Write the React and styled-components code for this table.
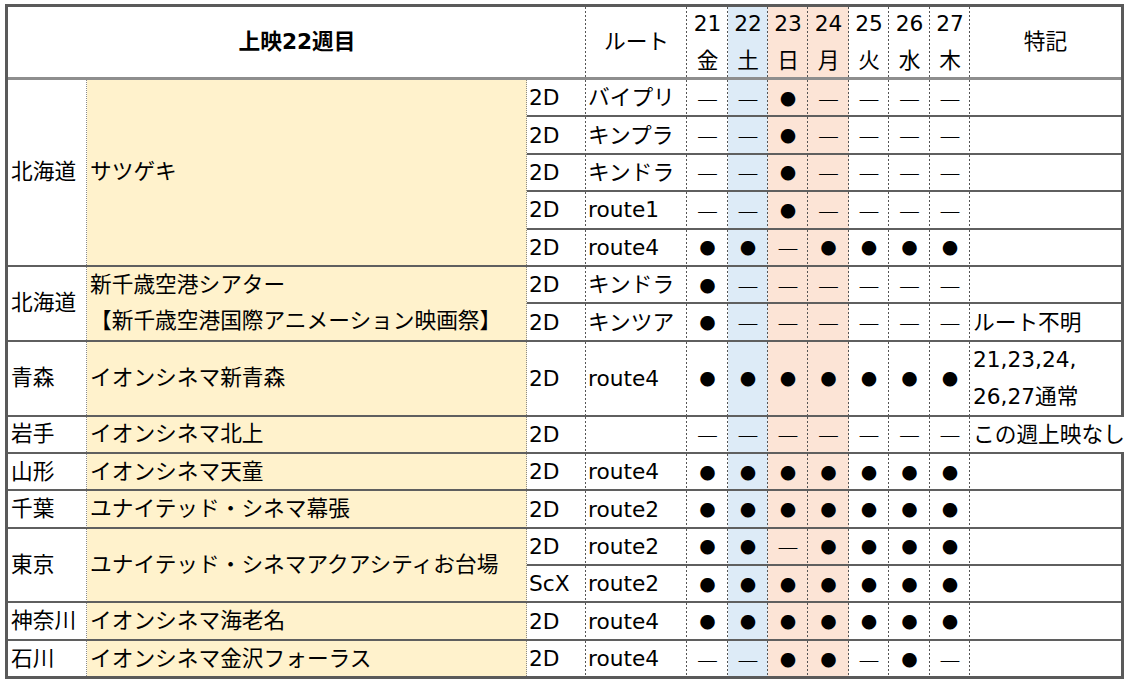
import styled, { createGlobalStyle } from 'styled-components'

const GlobalStyle = createGlobalStyle`
  html, body {
    margin: 0;
    padding: 0;
    background: #ffffff;
  }
  body {
    font-family: "DejaVu Sans", "Noto Sans CJK JP", sans-serif;
    color: #000;
  }
`

const ROW_H = 37.4
const COLS = '59px 101px 41px 40px 40px 41px 40px 41px 40px 151px'
const HEAD_COLS = '578px 101px 41px 40px 40px 41px 40px 41px 40px 151px'
const SHADES = { blue: '#ddebf7', pink: '#fce4d6' }

// vertical separators, drawn as a 1px strip on the right edge of a cell
const LINES = {
  fine: 'repeating-linear-gradient(to bottom, #8a8a8a 0 1px, transparent 1px 2px) right top / 1px 100% no-repeat',
  dot: 'repeating-linear-gradient(to bottom, #555 0 2px, transparent 2px 4px) right top / 1px 100% no-repeat',
}

const bg = p => (p.$line ? LINES[p.$line] + ', ' : '') + (p.$bg || '#ffffff')

const DAYS = [
  { d: 21, w: '金' },
  { d: 22, w: '土', shade: 'blue' },
  { d: 23, w: '日', shade: 'pink' },
  { d: 24, w: '月', shade: 'pink' },
  { d: 25, w: '火' },
  { d: 26, w: '水' },
  { d: 27, w: '木' },
]

const ALL = '●●●●●●●'

const GROUPS = [
  {
    pref: '北海道',
    name: ['サツゲキ'],
    rows: [
      { fmt: '2D', route: 'バイプリ', marks: '――●――――' },
      { fmt: '2D', route: 'キンプラ', marks: '――●――――' },
      { fmt: '2D', route: 'キンドラ', marks: '――●――――' },
      { fmt: '2D', route: 'route1', marks: '――●――――' },
      { fmt: '2D', route: 'route4', marks: '●●―●●●●' },
    ],
  },
  {
    pref: '北海道',
    name: ['新千歳空港シアター', '【新千歳空港国際アニメーション映画祭】'],
    rows: [
      { fmt: '2D', route: 'キンドラ', marks: '●――――――' },
      { fmt: '2D', route: 'キンツア', marks: '●――――――', note: ['ルート不明'] },
    ],
  },
  {
    pref: '青森',
    name: ['イオンシネマ新青森'],
    rows: [{ fmt: '2D', route: 'route4', marks: ALL, note: ['21,23,24,', '26,27通常'], tall: true }],
  },
  {
    pref: '岩手',
    name: ['イオンシネマ北上'],
    rows: [{ fmt: '2D', route: '', marks: '―――――――', note: ['この週上映なし'], spill: true }],
  },
  {
    pref: '山形',
    name: ['イオンシネマ天童'],
    rows: [{ fmt: '2D', route: 'route4', marks: ALL }],
  },
  {
    pref: '千葉',
    name: ['ユナイテッド・シネマ幕張'],
    rows: [{ fmt: '2D', route: 'route2', marks: ALL }],
  },
  {
    pref: '東京',
    name: ['ユナイテッド・シネマアクアシティお台場'],
    rows: [
      { fmt: '2D', route: 'route2', marks: '●●―●●●●' },
      { fmt: 'ScX', route: 'route2', marks: ALL },
    ],
  },
  {
    pref: '神奈川',
    name: ['イオンシネマ海老名'],
    rows: [{ fmt: '2D', route: 'route4', marks: ALL }],
  },
  {
    pref: '石川',
    name: ['イオンシネマ金沢フォーラス'],
    rows: [{ fmt: '2D', route: 'route4', marks: '――●●―●―' }],
  },
]

const Page = styled.div`
  padding: 4px 0 0 5px;
`

const Sheet = styled.div`
  width: 1113px;
  border: 3px solid #5a5a5a;
  font-size: 21.7px;
  line-height: 1.2;
`

const HeaderRow = styled.div`
  display: grid;
  grid-template-columns: ${HEAD_COLS};
  grid-template-rows: minmax(0, 1fr);
  height: 73px;
  box-sizing: border-box;
  border-bottom: 3px solid #8e8e8e;
`

const HeadCell = styled.div`
  display: flex;
  align-items: center;
  justify-content: center;
  font-weight: ${p => (p.$bold ? 700 : 400)};
  background: ${bg};
`

const DayHead = styled.div`
  display: flex;
  flex-direction: column;
  align-items: center;
  justify-content: center;
  line-height: 37px;
  min-height: 0;
  background: ${bg};
`

const Group = styled.div`
  display: flex;
  border-bottom: ${p => (p.$last ? 'none' : '2px solid #5f5f5f')};
`

const Pref = styled.div`
  width: 79px;
  flex: none;
  display: flex;
  align-items: center;
  padding-left: 3px;
  box-sizing: border-box;
  background: ${bg};
`

const Name = styled.div`
  width: 440px;
  flex: none;
  display: flex;
  flex-direction: column;
  justify-content: center;
  padding-left: 3px;
  box-sizing: border-box;
  line-height: ${p => (p.$multi ? '36px' : 1.2)};
  white-space: nowrap;
  background: ${bg};
`

const Rows = styled.div`
  flex: 1;
  display: flex;
  flex-direction: column;
`

const SubRow = styled.div`
  display: grid;
  grid-template-columns: ${COLS};
  grid-template-rows: minmax(0, 1fr);
  box-sizing: border-box;
  flex: none;
  height: ${p => p.$units * ROW_H - (p.$last ? 2 : 0)}px;
  border-bottom: ${p => (p.$last ? 'none' : '2px solid #5f5f5f')};
`

const TextCell = styled.div`
  display: flex;
  flex-direction: column;
  justify-content: center;
  min-height: 0;
  padding-left: ${p => p.$pad || 2}px;
  line-height: 37px;
  white-space: nowrap;
  background: ${bg};
  margin-right: ${p => (p.$spill ? '-3px' : 0)};
`

const Mark = styled.div`
  display: flex;
  align-items: center;
  justify-content: center;
  min-height: 0;
  font-family: "Noto Sans CJK JP", sans-serif;
  font-size: ${p => (p.$dot ? 16 : 22)}px;
  line-height: 1;
  background: ${bg};
`

const Line = styled.span`
  display: block;
`

const App = () => (
  <>
    <GlobalStyle />
    <Page>
      <Sheet>
        <HeaderRow>
          <HeadCell $bold $line="dot">上映22週目</HeadCell>
          <HeadCell $line="dot">ルート</HeadCell>
          {DAYS.map(day => (
            <DayHead key={day.d} $line="dot" $bg={SHADES[day.shade]}>
              <span>{day.d}</span>
              <span>{day.w}</span>
            </DayHead>
          ))}
          <HeadCell>特記</HeadCell>
        </HeaderRow>

        {GROUPS.map((g, gi) => (
          <Group key={gi} $last={gi === GROUPS.length - 1}>
            <Pref $line="fine">{g.pref}</Pref>
            <Name $line="fine" $bg="#fff2cc" $multi={g.name.length > 1}>
              {g.name.map(n => <Line key={n}>{n}</Line>)}
            </Name>
            <Rows>
              {g.rows.map((r, ri) => (
                <SubRow key={ri} $units={r.tall ? 2 : 1} $last={ri === g.rows.length - 1}>
                  <TextCell $line="dot">{r.fmt}</TextCell>
                  <TextCell $line="dot">{r.route}</TextCell>
                  {[...r.marks].map((m, mi) => (
                    <Mark key={mi} $dot={m === '●'} $line="dot" $bg={SHADES[DAYS[mi].shade]}>{m}</Mark>
                  ))}
                  <TextCell $pad={3} $spill={r.spill}>
                    {(r.note || []).map(n => <Line key={n}>{n}</Line>)}
                  </TextCell>
                </SubRow>
              ))}
            </Rows>
          </Group>
        ))}
      </Sheet>
    </Page>
  </>
)

export default App
